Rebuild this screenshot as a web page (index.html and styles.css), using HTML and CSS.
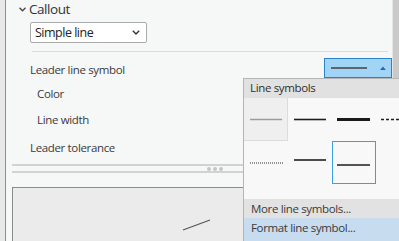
FILE: index.html
```html
<!DOCTYPE html>
<html>
<head>
<meta charset="utf-8">
<link rel="stylesheet" href="styles.css">
</head>
<body>
<div class="app">
  <div class="gutter"></div>
  <div class="accent"></div>
  <div class="panel">
    <div class="content">
      <div class="section-head">
        <svg class="chev" width="7" height="5" viewBox="0 0 7 5"><path d="M0.5 0.8 L3.5 3.8 L6.5 0.8" fill="none" stroke="#444" stroke-width="1.3"/></svg>
        <span>Callout</span>
      </div>
      <div class="select">
        <span>Simple line</span>
        <svg width="8" height="5" viewBox="0 0 8 5"><path d="M0.8 0.8 L4 4 L7.2 0.8" fill="none" stroke="#333" stroke-width="1.4"/></svg>
      </div>
      <div class="sep"></div>
      <div class="row first">
        <span>Leader line symbol</span>
        <div class="sym-btn">
          <span class="sym-line"></span>
          <svg width="6" height="4" viewBox="0 0 6 4"><path d="M0 4 L3 0.5 L6 4 Z" fill="#1a6fb8"/></svg>
        </div>
      </div>
      <div class="row sub color-row"><span>Color</span></div>
      <div class="row sub width-row"><span>Line width</span></div>
      <div class="row tol-row"><span>Leader tolerance</span></div>
      <div class="splitter">
        <div class="dots"><i></i><i></i><i></i></div>
      </div>
      <div class="preview">
        <svg class="canvas" width="380" height="60"><line x1="170" y1="42" x2="197" y2="32" stroke="#555" stroke-width="1.2"/></svg>
      </div>
    </div>
    <div class="scrollbar"></div>
  </div>
  <div class="popup">
    <div class="popup-head">Line symbols</div>
    <div class="grid">
      <div class="cell hover"><svg width="44" height="43"><line x1="6" y1="21.5" x2="38" y2="21.5" stroke="#9c9c9c" stroke-width="1.5"/></svg></div>
      <div class="cell"><svg width="44" height="43"><line x1="6" y1="21.5" x2="38" y2="21.5" stroke="#1e1e1e" stroke-width="1.6"/></svg></div>
      <div class="cell"><svg width="44" height="43"><line x1="5" y1="21.5" x2="38" y2="21.5" stroke="#1a1a1a" stroke-width="3"/></svg></div>
      <div class="cell"><svg width="23" height="43"><line x1="5" y1="21.5" x2="23" y2="21.5" stroke="#1e1e1e" stroke-width="1.6" stroke-dasharray="3 2"/></svg></div>
      <div class="cell"><svg width="44" height="43"><line x1="6" y1="22" x2="39" y2="22" stroke="#2a2a2a" stroke-width="1.2" stroke-dasharray="1 1"/></svg></div>
      <div class="cell"><svg width="44" height="43"><line x1="6" y1="19" x2="38" y2="19" stroke="#1e1e1e" stroke-width="1.6"/></svg></div>
      <div class="cell selected"><svg width="42" height="41"><line x1="4" y1="23" x2="37" y2="23" stroke="#1e1e1e" stroke-width="1.5"/></svg></div>
      <div class="cell"></div>
    </div>
    <div class="menu-item more">More line symbols...</div>
    <div class="menu-item format">Format line symbol...</div>
  </div>
</div>
</body>
</html>
```

FILE: styles.css
```css
html, body {
  margin: 0;
  padding: 0;
  width: 399px;
  height: 241px;
  overflow: hidden;
  background: #f6f7f7;
  font-family: "Open Sans", "Noto Sans", sans-serif;
  color: #3a3a3a;
}

.app {
  position: relative;
  display: flex;
  width: 399px;
  height: 241px;
  overflow: hidden;
}

.gutter {
  width: 5px;
  background: #e8e8e8;
}

.accent {
  width: 1px;
  background: #4aa2e2;
}

.panel {
  flex: 1;
  display: flex;
  min-width: 0;
}

.content {
  flex: 1;
  display: flex;
  flex-direction: column;
  min-width: 0;
}

.scrollbar {
  width: 6px;
  border-left: 1px solid #e4e4e4;
  background: #cacaca;
}

.section-head {
  height: 17px;
  display: flex;
  align-items: center;
  padding-left: 13px;
  font-size: 13.5px;
  letter-spacing: -0.45px;
  gap: 3px;
  color: #333;
}

.chev {
  display: block;
  margin-top: 1px;
}

.select {
  margin: 5px 0 0 24px;
  width: 117px;
  height: 21px;
  box-sizing: border-box;
  border: 1px solid #ababab;
  border-radius: 2px;
  background: #fff;
  display: flex;
  align-items: center;
  justify-content: space-between;
  padding: 0 6px 0 4px;
  font-size: 12.5px;
  letter-spacing: -0.5px;
  color: #222;
}

.sep {
  margin: 8px 4px 0 26px;
  height: 1px;
  background: #dcdcdc;
}

.row {
  display: flex;
  align-items: center;
  justify-content: space-between;
  height: 20px;
  padding-left: 24px;
  font-size: 11.5px;
  letter-spacing: -0.35px;
}

.row.first {
  margin-top: 5px;
  padding-top: 2px;
  height: 20px;
}

.row.sub {
  padding-left: 31px;
}

.color-row { margin-top: 4px; }
.width-row { margin-top: 6px; }
.tol-row { margin-top: 8px; }

.sym-btn {
  width: 68px;
  height: 20px;
  box-sizing: border-box;
  border: 1px solid #2b84c9;
  background: #a2d4f6;
  display: flex;
  align-items: center;
  padding: 0 5px 0 6px;
  gap: 13px;
  margin-top: -2px;
}

.sym-line {
  display: block;
  width: 37px;
  height: 2px;
  background: #5b6570;
}

.splitter {
  margin: 7px 0 0 6px;
  height: 5px;
  border-top: 2px solid #d2d2d2;
  border-bottom: 2px solid #d2d2d2;
  display: flex;
  align-items: center;
  justify-content: center;
  padding-left: 26px;
}

.dots {
  display: flex;
  gap: 2px;
}

.dots i {
  width: 4px;
  height: 4px;
  border-radius: 50%;
  background: #c6c6c6;
}

.preview {
  margin: 14px 0 0 6px;
  flex: 1;
  border-top: 1px solid #8a8a8a;
  border-left: 1px solid #8a8a8a;
  background: #ebebeb;
  overflow: hidden;
}

.canvas {
  display: block;
}

.popup {
  position: absolute;
  left: 243px;
  top: 78px;
  width: 156px;
  height: 163px;
  box-sizing: border-box;
  border-left: 1px solid #b5b5b5;
  border-top: 1px solid #b5b5b5;
  background: #f8f8f8;
  font-size: 11.5px;
  letter-spacing: -0.35px;
  overflow: hidden;
}

.popup-head {
  height: 19px;
  line-height: 18px;
  background: #e1e1e1;
  padding-left: 6px;
  color: #2e2e2e;
}

.grid {
  display: grid;
  grid-template-columns: 44px 44px 44px 23px;
  grid-template-rows: repeat(2, 43px);
}

.cell {
  box-sizing: border-box;
}

.cell svg {
  display: block;
}

.cell.hover {
  background: #efefef;
  border-right: 1px solid #dcdcdc;
  border-bottom: 1px solid #dcdcdc;
}

.cell.selected {
  border: 1px solid #3b9fe4;
}

.menu-item {
  padding-left: 7px;
  color: #3a3a3a;
}

.menu-item.more {
  margin-top: 15px;
  height: 19px;
  line-height: 19px;
  background: #e2e2e2;
}

.menu-item.format {
  height: 24px;
  line-height: 19px;
  background: #c7dcef;
}
```
